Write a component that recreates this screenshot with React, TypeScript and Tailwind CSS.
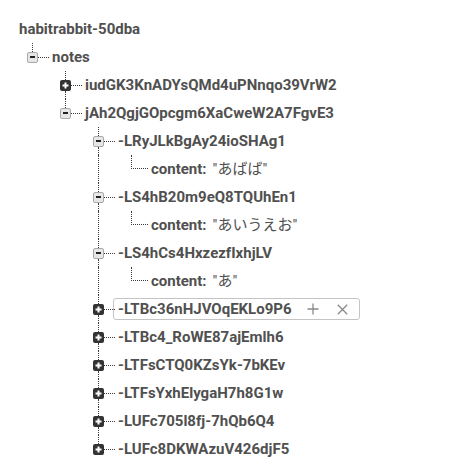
import React from "react";

type N = { label: string; value?: string; open?: boolean; kids?: N[]; hl?: boolean };

const tree: N = {
  label: "habitrabbit-50dba",
  open: true,
  kids: [
    {
      label: "notes",
      open: true,
      kids: [
        { label: "iudGK3KnADYsQMd4uPNnqo39VrW2", kids: [{ label: "x" }] },
        {
          label: "jAh2QgjGOpcgm6XaCweW2A7FgvE3",
          open: true,
          kids: [
            { label: "-LRyJLkBgAy24ioSHAg1", open: true, kids: [{ label: "content", value: "\"あばば\"" }] },
            { label: "-LS4hB20m9eQ8TQUhEn1", open: true, kids: [{ label: "content", value: "\"あいうえお\"" }] },
            { label: "-LS4hCs4HxzezfIxhjLV", open: true, kids: [{ label: "content", value: "\"あ\"" }] },
            { label: "-LTBc36nHJVOqEKLo9P6", hl: true, kids: [{ label: "x" }] },
            { label: "-LTBc4_RoWE87ajEmlh6", kids: [{ label: "x" }] },
            { label: "-LTFsCTQ0KZsYk-7bKEv", kids: [{ label: "x" }] },
            { label: "-LTFsYxhElygaH7h8G1w", kids: [{ label: "x" }] },
            { label: "-LUFc705l8fj-7hQb6Q4", kids: [{ label: "x" }] },
            { label: "-LUFc8DKWAzuV426djF5", kids: [{ label: "x" }] },
          ],
        },
      ],
    },
  ],
};

const LINE = "border-dotted border-[#3a3a3a]";

function MinusBox() {
  return (
    <div className="flex h-[11px] w-[11px] shrink-0 items-center justify-center rounded-[2px] border border-[#a9a9a9] bg-[#e6e6e6]">
      <div className="h-[2px] w-[5px] bg-[#222]" />
    </div>
  );
}

function PlusBox() {
  return (
    <div className="flex h-[11px] w-[11px] shrink-0 items-center justify-center rounded-[2px] bg-[#333]">
      <svg width="7" height="7" viewBox="0 0 7 7">
        <path d="M3.5 0.5v6M0.5 3.5h6" stroke="#fff" strokeWidth="2" />
      </svg>
    </div>
  );
}

function AncestorCell({ line }: { line: boolean }) {
  return (
    <div className="flex w-[33px] shrink-0">
      <div className="w-[16px] shrink-0" />
      {line && <div className={`w-0 border-l ${LINE}`} />}
    </div>
  );
}

function ToggleCell({ open, last }: { open: boolean; last: boolean }) {
  return (
    <div className="flex w-[33px] shrink-0">
      <div className="w-[11px] shrink-0" />
      <div className="flex w-[11px] shrink-0 flex-col">
        <div className={`ml-[5px] w-0 flex-1 border-l ${LINE}`} />
        {open ? <MinusBox /> : <PlusBox />}
        <div
          className={`ml-[5px] w-0 flex-1 border-l border-dotted ${last ? "border-transparent" : "border-[#3a3a3a]"}`}
        />
      </div>
      <div className="flex flex-1 items-center">
        <div className={`w-full border-t ${LINE}`} />
      </div>
    </div>
  );
}

function LeafCell({ last }: { last: boolean }) {
  return (
    <div className="flex w-[33px] shrink-0">
      <div className="w-[16px] shrink-0" />
      <div className="flex flex-1 flex-col">
        <div className={`h-[14px] border-b border-l ${LINE}`} />
        <div className={`flex-1 border-l border-dotted ${last ? "border-transparent" : "border-[#3a3a3a]"}`} />
      </div>
    </div>
  );
}

function PlusIcon() {
  return (
    <svg width="12" height="12" viewBox="0 0 12 12">
      <path d="M6 0.5v11M0.5 6h11" stroke="#8a8a8a" strokeWidth="1.3" />
    </svg>
  );
}

function XIcon() {
  return (
    <svg width="11" height="11" viewBox="0 0 11 11">
      <path d="M0.8 0.8l9.4 9.4M10.2 0.8l-9.4 9.4" stroke="#8a8a8a" strokeWidth="1.3" />
    </svg>
  );
}

function Rows({ node, lasts, last }: { node: N; lasts: boolean[]; last: boolean }): React.ReactElement {
  const isLeaf = node.value !== undefined;
  const hasKids = !isLeaf;
  return (
    <>
      <div className="flex h-[28px] items-stretch pl-[16px]">
        {lasts.map((l, i) => (
          <AncestorCell key={i} line={!l} />
        ))}
        {isLeaf ? <LeafCell last={last} /> : <ToggleCell open={!!node.open} last={last} />}
        {node.hl ? (
          <div className="my-auto -ml-[2px] flex h-[22px] w-[247px] items-center rounded-[3px] border border-[#c4c4c4] pl-[4px] pr-[11px]">
            <span className="text-[15px] font-bold text-[#505050]">{node.label}</span>
            <div className="flex-1" />
            <PlusIcon />
            <div className="w-[18px]" />
            <XIcon />
          </div>
        ) : isLeaf ? (
          <div className="ml-[3px] flex items-center whitespace-nowrap">
            <span className="text-[15px] font-bold text-[#505050]">{node.label}:</span>
            <span className="ml-[6px] text-[15px] text-[#505050]">{node.value}</span>
          </div>
        ) : (
          <div className="ml-[3px] flex items-center whitespace-nowrap text-[15px] font-bold text-[#505050]">
            {node.label}
          </div>
        )}
      </div>
      {hasKids && node.open &&
        node.kids!.map((k, i) => (
          <Rows key={i} node={k} lasts={[...lasts, last]} last={i === node.kids!.length - 1} />
        ))}
    </>
  );
}

export default function App() {
  return (
    <div
      className="min-h-[469px] w-[450px] bg-white pt-[15px]"
      style={{ fontFamily: "Roboto, 'Noto Sans CJK JP', sans-serif" }}
    >
      <div className="flex h-[28px] items-center pl-[19px] text-[15px] font-bold text-[#505050]">
        {tree.label}
      </div>
      {tree.kids!.map((k, i) => (
        <Rows key={i} node={k} lasts={[]} last={i === tree.kids!.length - 1} />
      ))}
    </div>
  );
}
